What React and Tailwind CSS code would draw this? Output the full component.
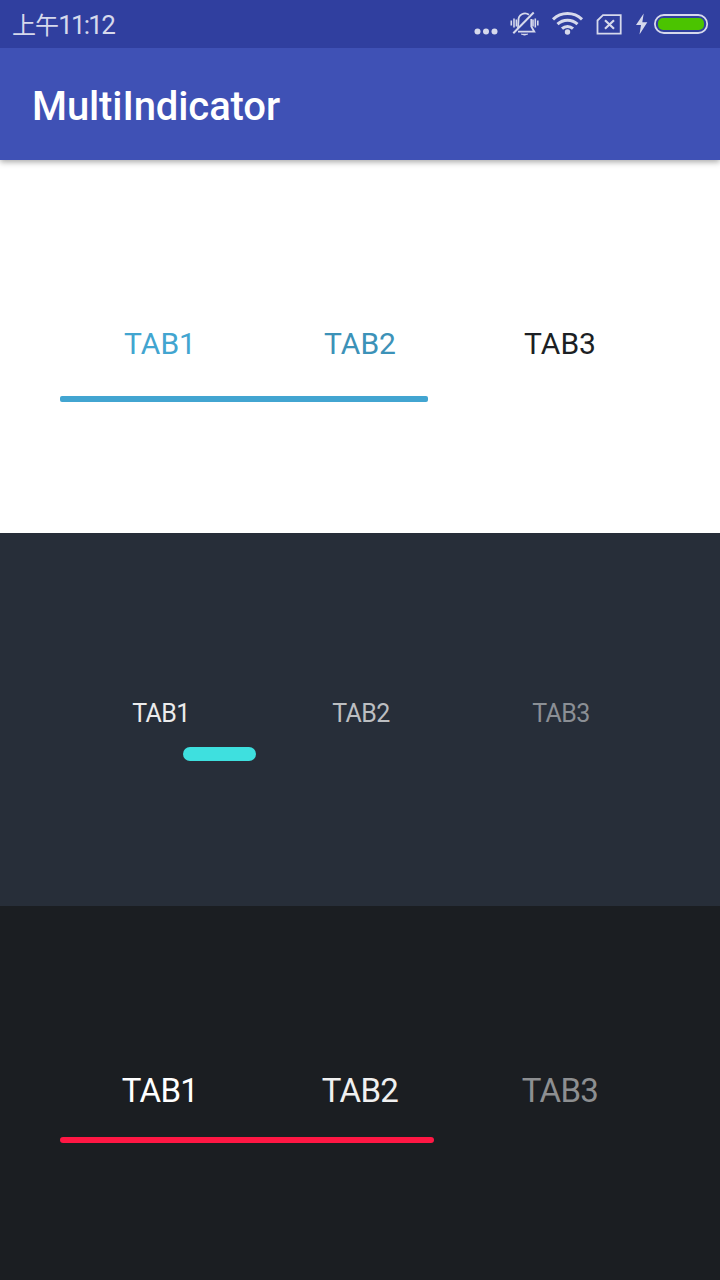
function StatusBar() {
  return (
    <header className="relative z-10 flex h-12 items-center bg-[#303f9f] text-[#d6d9ec]">
      <div className="flex h-12 grow items-baseline whitespace-nowrap pl-3 pt-px font-['Roboto','Noto_Sans_CJK_SC',sans-serif] leading-[48px]">
        <span className="text-[24px] tracking-[-0.9px]">上午</span>
        <span className="text-[26px] tracking-[-1.8px]">11:12</span>
      </div>
      <svg className="h-12 w-[250px]" viewBox="470 0 250 48" fill="none" stroke="currentColor">
        <g fill="currentColor" stroke="none">
          <circle cx="477.5" cy="31.5" r="3" />
          <circle cx="486" cy="31.5" r="3" />
          <circle cx="494.5" cy="31.5" r="3" />
        </g>
        <path
          d="M518 28 L518.5 20.5 A6.5 6.5 0 0 1 529 14.8 M531.3 19 L531.3 26.5 L534.3 31.7 L518 31.7"
          strokeWidth="1.8"
        />
        <path d="M513.3 33.3 L533.7 12.5" strokeWidth="2" />
        <path d="M521 34 H528 Q524.5 36.5 521 34 Z" fill="currentColor" strokeWidth="0.5" />
        <path
          d="M511.3 20.5 V25.5 M514 18.5 V27.5 M516.4 19.5 V26.5 M533 19.5 V26.5 M535.3 18.5 V27.5 M537.8 20.5 V25.5"
          strokeWidth="1.6"
        />
        <circle cx="567.5" cy="32" r="2.7" fill="currentColor" stroke="none" />
        <path
          d="M553 19.3 A21 21 0 0 1 582 19.3 M557.5 24.2 A14.5 14.5 0 0 1 577.5 24.2 M562 28.6 A8 8 0 0 1 573 28.6"
          strokeWidth="3"
        />
        <path d="M603 15.2 H620.7 V33.7 H597.5 V20.5 Z" strokeWidth="1.8" />
        <path d="M605 20.3 L614 28.7 M614 20.3 L605 28.7" strokeWidth="2.2" />
        <path d="M643.7 13.5 L636 25 H641 L639.5 34.5 L647.3 22.3 H642.3 Z" fill="currentColor" stroke="none" />
        <rect x="654.9" y="15" width="52.3" height="18" rx="9" strokeWidth="1.8" />
        <rect x="658" y="18" width="46" height="12" rx="5" fill="#4bc400" stroke="none" />
      </svg>
    </header>
  );
}

function TabStrip({ className, tabs, tabClassName, indicatorClassName }) {
  return (
    <section className={`px-[60px] ${className}`}>
      <nav className={`flex items-start ${tabClassName}`}>
        {tabs.map((color, i) => (
          <button key={i} type="button" className={`w-[200px] text-center ${color}`}>
            {`TAB${i + 1}`}
          </button>
        ))}
      </nav>
      <div className={indicatorClassName} />
    </section>
  );
}

export default function App() {
  return (
    <main className="flex h-[1280px] w-[720px] flex-col overflow-hidden bg-white font-['Roboto',sans-serif]">
      <StatusBar />
      <div className="relative h-28 bg-[#3f51b5] pl-8 pt-[3px] shadow-[0_2px_6px_rgba(0,0,0,0.35)]">
        <h1 className="text-[40px] font-medium leading-[112px] tracking-[-0.1px] text-white">MultiIndicator</h1>
      </div>
      <TabStrip
        className="h-[373px] bg-white pt-[164px]"
        tabs={['text-[#42a5d0]', 'text-[#3c92b8]', 'text-[#1c1f24]']}
        tabClassName="h-[72px] text-[30px] leading-[40px]"
        indicatorClassName="ml-[0.4px] h-1.5 w-[367.6px] rounded-[2px] bg-[#42a5d1]"
      />
      <TabStrip
        className="h-[373px] bg-[#272e39] pt-[161px]"
        tabs={['text-[#ebebec]', 'text-[#bcbec1]', 'text-[#8b8f95]']}
        tabClassName="h-[53px] translate-x-px text-[25px] leading-[40px] tracking-[-0.6px]"
        indicatorClassName="ml-[123px] h-3.5 w-[73px] rounded-full bg-[#3ee0df]"
      />
      <TabStrip
        className="h-[374px] bg-[#1b1e22] pt-[165px]"
        tabs={['text-white', 'text-[#f0f0f0]', 'text-[#8d8f91]']}
        tabClassName="h-[66px] text-[33px] leading-[40px] tracking-[-0.7px]"
        indicatorClassName="h-1.5 w-[374.3px] rounded-full bg-[#ff1744]"
      />
    </main>
  );
}
